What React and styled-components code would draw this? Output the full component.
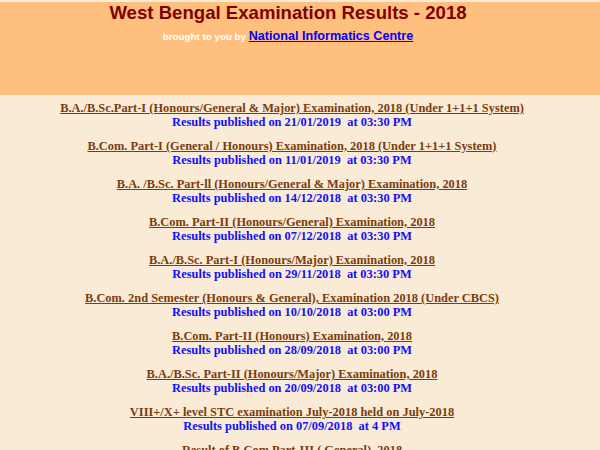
import React from 'react'
import styled, { createGlobalStyle } from 'styled-components'

const GlobalStyle = createGlobalStyle`
  html, body {
    margin: 0;
    padding: 0;
    background: #faebd7;
    overflow: hidden;
  }
`

const results = [
  { title: 'B.A./B.Sc.Part-I (Honours/General & Major) Examination, 2018 (Under 1+1+1 System)', date: '21/01/2019', time: '03:30 PM' },
  { title: 'B.Com. Part-I (General / Honours) Examination, 2018 (Under 1+1+1 System)', date: '11/01/2019', time: '03:30 PM' },
  { title: 'B.A. /B.Sc. Part-ll (Honours/General & Major) Examination, 2018', date: '14/12/2018', time: '03:30 PM' },
  { title: 'B.Com. Part-II (Honours/General) Examination, 2018', date: '07/12/2018', time: '03:30 PM' },
  { title: 'B.A./B.Sc. Part-I (Honours/Major) Examination, 2018', date: '29/11/2018', time: '03:30 PM' },
  { title: 'B.Com. 2nd Semester (Honours & General), Examination 2018 (Under CBCS)', date: '10/10/2018', time: '03:00 PM' },
  { title: 'B.Com. Part-II (Honours) Examination, 2018', date: '28/09/2018', time: '03:00 PM' },
  { title: 'B.A./B.Sc. Part-II (Honours/Major) Examination, 2018', date: '20/09/2018', time: '03:00 PM' },
  { title: 'VIII+/X+ level STC examination July-2018 held on July-2018', date: '07/09/2018', time: '4 PM' },
  { title: 'Result of B.Com Part-III ( General), 2018', date: '03/09/2018', time: '03:00 PM' },
]

const App = () => {
  return (
    <Page>
      <GlobalStyle />
      <Header>
        <Title>West Bengal Examination Results - 2018</Title>
        <Byline>
          brought to you by <a href='#'>National Informatics Centre</a>
        </Byline>
      </Header>
      <List>
        {results.map((r) => (
          <Item key={r.title}>
            <ExamLink href='#'>{r.title}</ExamLink>
            <Published>
              Results published on {r.date}{'\u00a0'} at {r.time}
            </Published>
          </Item>
        ))}
      </List>
    </Page>
  )
}

const Page = styled.div`
  width: 600px;
  height: 450px;
  padding-top: 2px;
  box-sizing: border-box;
  overflow: hidden;
`

const Header = styled.div`
  height: 93px;
  background: #ffbf7f;
  padding: 2px 24px 0 0;
  box-sizing: border-box;
  text-align: center;
  font-family: 'Liberation Sans', Arial, sans-serif;
  font-weight: bold;
`

const Title = styled.div`
  font-size: 18.6px;
  line-height: 18.6px;
  color: #800000;
`

const Byline = styled.div`
  margin-top: 5.5px;
  font-size: 9.8px;
  line-height: 16px;
  color: #ffffff;

  a {
    font-size: 12.6px;
    color: #0000ff;
    text-decoration: underline;
  }
`

const List = styled.div`
  margin-top: 7px;
  padding-right: 16px;
  display: flex;
  flex-direction: column;
  align-items: center;
  gap: 10.6px;
  font-family: 'Liberation Serif', 'Times New Roman', serif;
  font-weight: bold;
  font-size: 12.4px;
  line-height: 13.7px;
`

const Item = styled.div`
  display: flex;
  flex-direction: column;
  align-items: center;
  text-align: center;
`

const ExamLink = styled.a`
  color: #7c3c0c;
  text-decoration: underline;
  white-space: nowrap;
`

const Published = styled.div`
  color: #1010ff;
  white-space: nowrap;
`

export default App
